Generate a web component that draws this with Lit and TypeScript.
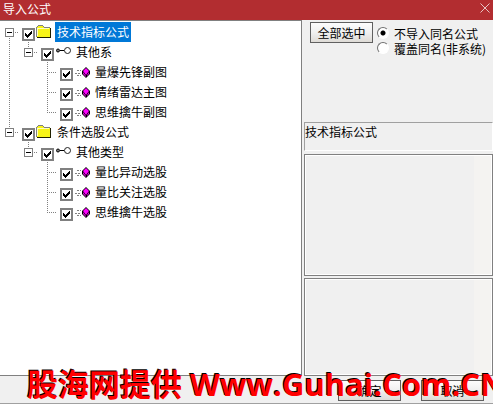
import { LitElement, html, css, svg, nothing } from "lit";
import { customElement, property, state } from "lit/decorators.js";

type Kind = "folder" | "group" | "formula";

interface Row {
  id: string;
  text: string;
  kind: Kind;
  guides: string[];
}

const rows: Row[] = [
  { id: "r1", text: "技术指标公式", kind: "folder", guides: ["first"] },
  { id: "r2", text: "其他系", kind: "group", guides: ["line", "box"] },
  { id: "r3", text: "量爆先锋副图", kind: "formula", guides: ["line", "none", "tee"] },
  { id: "r4", text: "情绪雷达主图", kind: "formula", guides: ["line", "none", "tee"] },
  { id: "r5", text: "思维擒牛副图", kind: "formula", guides: ["line", "none", "end"] },
  { id: "r6", text: "条件选股公式", kind: "folder", guides: ["box"] },
  { id: "r7", text: "其他类型", kind: "group", guides: ["none", "box"] },
  { id: "r8", text: "量比异动选股", kind: "formula", guides: ["none", "none", "tee"] },
  { id: "r9", text: "量比关注选股", kind: "formula", guides: ["none", "none", "tee"] },
  { id: "r10", text: "思维擒牛选股", kind: "formula", guides: ["none", "none", "end"] },
];

const dots = (x1: number, y1: number, x2: number, y2: number) =>
  svg`<line x1=${x1} y1=${y1} x2=${x2} y2=${y2} stroke="#808080" stroke-dasharray="1 1" />`;

const guide = (type: string) => html`
  <svg width="19" height="20" shape-rendering="crispEdges" aria-hidden="true">
    ${type === "line" || type === "tee" ? dots(9.5, 0, 9.5, 20) : nothing}
    ${type === "end" ? dots(9.5, 0, 9.5, 10) : nothing}
    ${type === "first" ? dots(9.5, 16, 9.5, 20) : nothing}
    ${type === "box" ? dots(9.5, 0, 9.5, 6) : nothing}
    ${type === "tee" || type === "end" ? dots(9, 10.5, 19, 10.5) : nothing}
    ${type === "first" || type === "box"
      ? svg`<rect x="5.5" y="6.5" width="8" height="8" fill="#fff" stroke="#808080" />
          <path d="M7 10.5h5" stroke="#000" />${dots(15, 10.5, 19, 10.5)}`
      : nothing}
  </svg>
`;

const icons = {
  folder: html`<svg width="16" height="16" shape-rendering="crispEdges" aria-hidden="true">
    <defs>
      <pattern id="weave" width="2" height="2" patternUnits="userSpaceOnUse">
        <rect width="2" height="2" fill="#ffff00" />
        <path d="M0 0h1v1h-1zM1 1h1v1h-1z" fill="#f0e830" />
      </pattern>
    </defs>
    <path d="M1 3h1v-1h5v1h1v1h6v9H1z" fill="url(#weave)" />
    <path d="M0 3h1v10H0zM1 2h1v1H1zM2 1h5v1H2zM7 2h1v1H7zM8 3h6v1H8z" fill="#808080" />
    <path d="M1 4h1v8H1zM2 4h11v1H2z" fill="#ffffc0" />
    <path d="M1 13h14v1H1zM14 4h1v10h-1z" fill="#202000" />
  </svg>`,
  group: html`<svg width="16" height="16" aria-hidden="true">
    <circle cx="3" cy="6.5" r="1.5" fill="#808080" stroke="#000" />
    <path d="M5 6.5h4" stroke="#000" />
    <circle cx="12.5" cy="6.5" r="3" fill="#fff" stroke="#202020" />
  </svg>`,
  formula: html`<svg width="16" height="16" aria-hidden="true">
    <path d="M3 6.5h4M1 9.5h5M3 11.5h4" stroke="#808080" stroke-dasharray="2 1" shape-rendering="crispEdges" />
    <path d="M12 3l4 4v3l-4 4-4-4V7z" fill="#000" />
    <path d="M12 4l3 3-3 4-3-4z" fill="#ff00ff" />
    <path d="M9 8l3 4v1L9 10zM15 8l-2 3v1l2-2z" fill="#e000e0" />
  </svg>`,
};

@customElement("formula-row")
class FormulaRow extends LitElement {
  @property({ attribute: false }) row!: Row;
  @property({ type: Boolean }) selected = false;

  static styles = css`
    :host {
      display: flex;
      height: 20px;
    }
    svg {
      display: block;
      flex: none;
    }
    .toggle {
      appearance: none;
      border: 0;
      padding: 0;
      margin: 0;
      background: none;
    }
    .item {
      display: flex;
      padding-left: 3px;
      white-space: nowrap;
    }
    .check {
      display: grid;
      place-items: center;
      width: 13px;
      height: 13px;
      margin-top: 6px;
    }
    .check > * {
      grid-area: 1 / 1;
    }
    .tick {
      appearance: none;
      box-sizing: border-box;
      width: 13px;
      height: 13px;
      margin: 0;
      border: 2px solid #808080;
      background: #fff;
    }
    .mark {
      visibility: hidden;
      pointer-events: none;
    }
    .tick:checked + .mark {
      visibility: visible;
    }
    .icon {
      padding: 2px 3px 0 1px;
    }
    .text {
      padding: 0 2px;
      line-height: 20px;
    }
    .selected {
      background: #0078d7;
      color: #fff;
    }
  `;

  render() {
    const { text, kind, guides } = this.row;
    return html`
      ${guides.map((g) =>
        g === "box" || g === "first"
          ? html`<button class="toggle" type="button" aria-label="折叠">${guide(g)}</button>`
          : guide(g)
      )}
      <label class="item">
        <span class="check">
          <input class="tick" type="checkbox" checked />
          <svg class="mark" width="7" height="7" shape-rendering="crispEdges" aria-hidden="true">
            <path d="M0 2h1v1h1v1h1V3h1V2h1V1h1V0h1v3H6v1H5v1H4v1H3v1H2V6H1V5H0z" />
          </svg>
        </span>
        <span class="icon">${icons[kind]}</span>
        <span class="text ${this.selected ? "selected" : ""}">${text}</span>
      </label>
    `;
  }
}

@customElement("app-root")
class AppRoot extends LitElement {
  @state() private current = "r1";

  static styles = css`
    :host {
      position: relative;
      display: flex;
      flex-direction: column;
      min-height: 100vh;
      box-sizing: border-box;
      overflow: hidden;
      border-bottom: 1px solid #a0a0a0;
      background: #f0f0f0;
      color: #000;
      font: 12px/16px "Noto Sans CJK SC", sans-serif;
    }
    .title {
      display: flex;
      justify-content: space-between;
      align-items: center;
      height: 20px;
      padding: 0 3px;
      background: #b22d30;
      color: #fff;
    }
    .name {
      margin: 0;
      padding-bottom: 2px;
      font: inherit;
    }
    .close {
      display: grid;
      padding: 0 0 4px;
      border: 0;
      background: none;
    }
    .main {
      flex: 1;
      display: grid;
      grid-template-columns: minmax(0, 1fr) 191px;
    }
    .tree {
      padding-top: 1px;
      border: solid #808080;
      border-width: 1px 1px 1px 0;
      background: #fff;
    }
    .side {
      display: flex;
      flex-direction: column;
      padding-left: 2px;
    }
    .options {
      display: flex;
      gap: 4px;
      height: 98px;
      padding: 2px 0 0 6px;
    }
    .push {
      box-sizing: border-box;
      width: 63px;
      height: 21px;
      padding: 0;
      border: 1px solid #606060;
      background: linear-gradient(#fdfdfd, #f0f0f0 50%, #dedbd6);
      color: #000;
      font: inherit;
      line-height: 18px;
    }
    .choices {
      margin: 0;
      padding: 4px 0 0;
      border: 0;
    }
    .choice {
      display: flex;
      align-items: center;
      gap: 5px;
      height: 15px;
      line-height: 15px;
      white-space: nowrap;
    }
    .radio {
      appearance: none;
      box-sizing: border-box;
      width: 12px;
      height: 12px;
      margin: 0 0 2px;
      border: 1px solid;
      border-color: #707070 #fff #fff #707070;
      border-radius: 50%;
      background: #fff;
    }
    .radio:checked {
      background: radial-gradient(circle, #000 2px, #fff 3px);
    }
    .caption {
      box-sizing: border-box;
      height: 29px;
      margin: 2px 0 3px;
      border: 1px solid;
      border-color: #a0a0a0 #fff #fff #a0a0a0;
      line-height: 18px;
    }
    .pane {
      box-sizing: border-box;
      min-height: 60px;
      margin-bottom: 2px;
      border: 1px solid #808080;
      box-shadow: inset 0 0 0 1px #fff;
      background: linear-gradient(#f4f3f1, #f4f3f1) right / 18px 100% no-repeat;
    }
    .upper {
      flex: 122 1 0;
    }
    .lower {
      flex: 98 1 0;
      margin-bottom: 0;
    }
    .footer {
      display: flex;
      justify-content: flex-end;
      gap: 20px;
      padding: 4px 9px 2px;
    }
    .banner {
      position: absolute;
      left: 27px;
      bottom: 1px;
      pointer-events: none;
      white-space: nowrap;
      color: #f00;
      text-shadow: -1px -1px #000;
      font: bold 31px/36px "Open Sans", "Noto Sans CJK SC", sans-serif;
    }
  `;

  render() {
    return html`
      <header class="title">
        <h1 class="name">导入公式</h1>
        <button class="close" type="button" aria-label="关闭">
          <svg width="10" height="10" aria-hidden="true">
            <path d="M.5 .5l9 9M9.5 .5l-9 9" stroke="#e8c4c4" />
          </svg>
        </button>
      </header>
      <main class="main">
        <div class="tree">
          ${rows.map(
            (r) => html`<formula-row .row=${r} .selected=${r.id === this.current}
              @click=${() => (this.current = r.id)}></formula-row>`
          )}
        </div>
        <section class="side">
          <div class="options">
            <button class="push" type="button">全部选中</button>
            <fieldset class="choices">
              <label class="choice"><input class="radio" type="radio" name="mode" checked />不导入同名公式</label>
              <label class="choice"><input class="radio" type="radio" name="mode" />覆盖同名(非系统)</label>
            </fieldset>
          </div>
          <div class="caption">${rows.find((r) => r.id === this.current)?.text}</div>
          <div class="pane upper"></div>
          <div class="pane lower"></div>
        </section>
      </main>
      <footer class="footer">
        <button class="push" type="button">确定</button>
        <button class="push" type="button">取消</button>
      </footer>
      <div class="banner">股海网提供 Www.Guhai.Com.CN</div>
    `;
  }
}
